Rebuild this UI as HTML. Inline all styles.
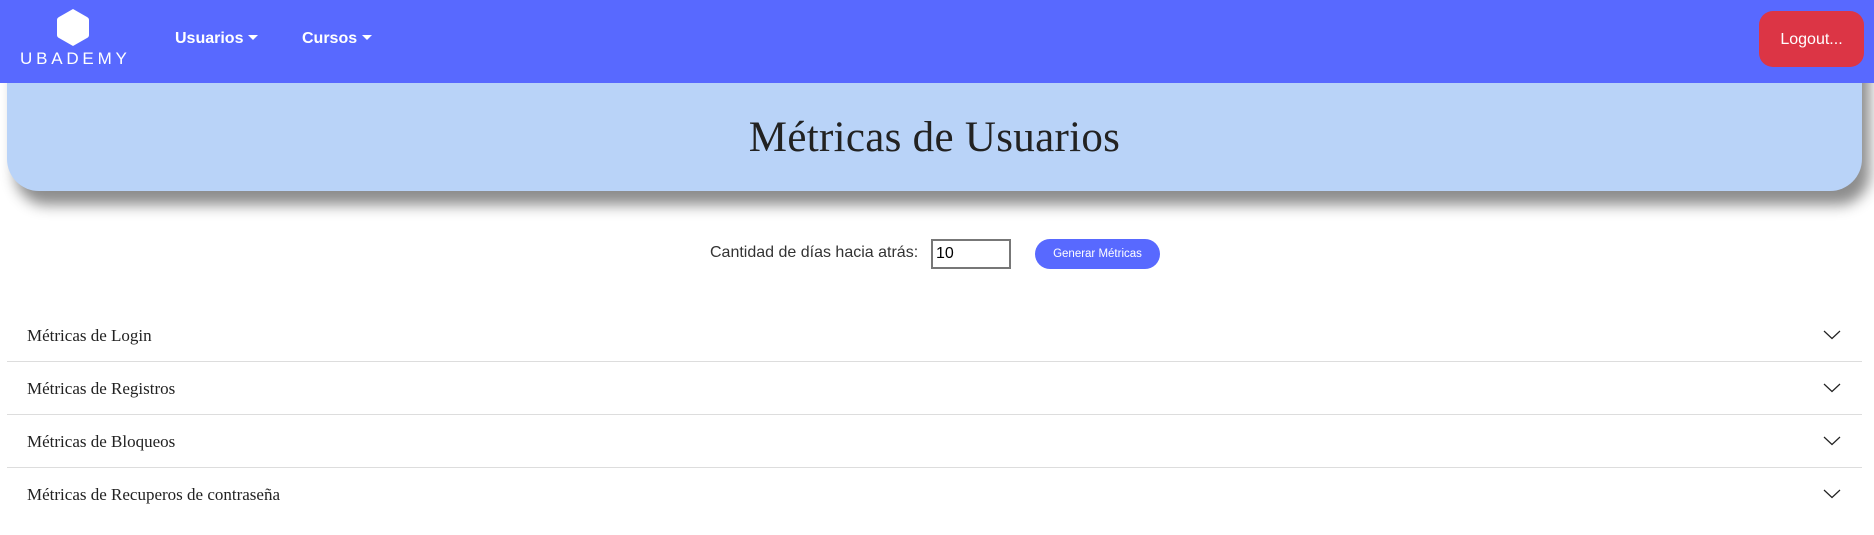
<!DOCTYPE html>
<html><head><meta charset="utf-8"><style>
*{box-sizing:border-box;margin:0;padding:0}
body{width:1874px;height:535px;overflow:hidden;background:#fff;font-family:"Liberation Sans",sans-serif;position:relative}
.nav{position:absolute;left:0;top:0;width:1874px;height:83px;background:#5869ff;z-index:2}
.logo{position:absolute;left:55px;top:7px}
.brand{position:absolute;left:20px;top:49px;width:108px;color:#fff;font-size:17px;letter-spacing:3.8px}
.nl{position:absolute;top:30px;color:#fff;font-weight:bold;font-size:16px}
.nl:after{content:"";display:inline-block;margin-left:5px;vertical-align:3px;border-left:5px solid transparent;border-right:5px solid transparent;border-top:5px solid #fff}
.logout{position:absolute;left:1759px;top:11px;width:105px;height:56px;background:#dc3545;border-radius:14px;color:#fff;font-size:16px;text-align:center;line-height:58px}
.card{position:absolute;left:7px;top:50px;width:1855px;height:141px;background:#b9d3f8;border-radius:0 0 32px 32px;box-shadow:8px 14px 14px rgba(0,0,0,.45);z-index:1}
.title{position:absolute;left:0;width:100%;top:63px;text-align:center;font-family:"Liberation Serif",serif;font-size:43px;color:#222;letter-spacing:.3px}
.lbl{position:absolute;left:710px;top:244px;font-size:16px;color:#333}
.inp{position:absolute;left:931px;top:239px;width:80px;height:30px;border:2px solid #777;font-size:16px;padding-left:3px;line-height:26px;color:#000}
.btn{position:absolute;left:1035px;top:239px;width:125px;height:30px;border-radius:15px;background:#5869ff;color:#fff;font-size:11.5px;text-align:center;line-height:31px}
.row{position:absolute;left:7px;width:1855px;height:53px;border-bottom:1px solid #ddd;font-family:"Liberation Serif",serif;font-size:17px;color:#222;padding-left:20px;line-height:53px}
.row svg{position:absolute;left:1816px;top:21px}
</style></head><body>
<div class="nav">
<svg class="logo" width="36" height="40" viewBox="0 0 36 40"><path d="M18 2 L32 10 Q34 11 34 13 L34 28 Q34 30 32 31 L18 39 L4 31 Q2 30 2 28 L2 13 Q2 11 4 10 Z" fill="#fff"/></svg>
<div class="brand">UBADEMY</div>
<div class="nl" style="left:175px">Usuarios</div>
<div class="nl" style="left:302px">Cursos</div>
<div class="logout">Logout...</div>
</div>
<div class="card"><div class="title">Métricas de Usuarios</div></div>
<div class="lbl">Cantidad de días hacia atrás:</div>
<div class="inp">10</div>
<div class="btn">Generar Métricas</div>
<div class="row" style="top:309px">Métricas de Login<svg width="18" height="10" viewBox="0 0 18 10"><path d="M1 1 L9 8.5 L17 1" fill="none" stroke="#222" stroke-width="1.2"/></svg></div>
<div class="row" style="top:362px">Métricas de Registros<svg width="18" height="10" viewBox="0 0 18 10"><path d="M1 1 L9 8.5 L17 1" fill="none" stroke="#222" stroke-width="1.2"/></svg></div>
<div class="row" style="top:415px">Métricas de Bloqueos<svg width="18" height="10" viewBox="0 0 18 10"><path d="M1 1 L9 8.5 L17 1" fill="none" stroke="#222" stroke-width="1.2"/></svg></div>
<div class="row" style="top:468px;border-bottom:none">Métricas de Recuperos de contraseña<svg width="18" height="10" viewBox="0 0 18 10"><path d="M1 1 L9 8.5 L17 1" fill="none" stroke="#222" stroke-width="1.2"/></svg></div>
</body></html>
